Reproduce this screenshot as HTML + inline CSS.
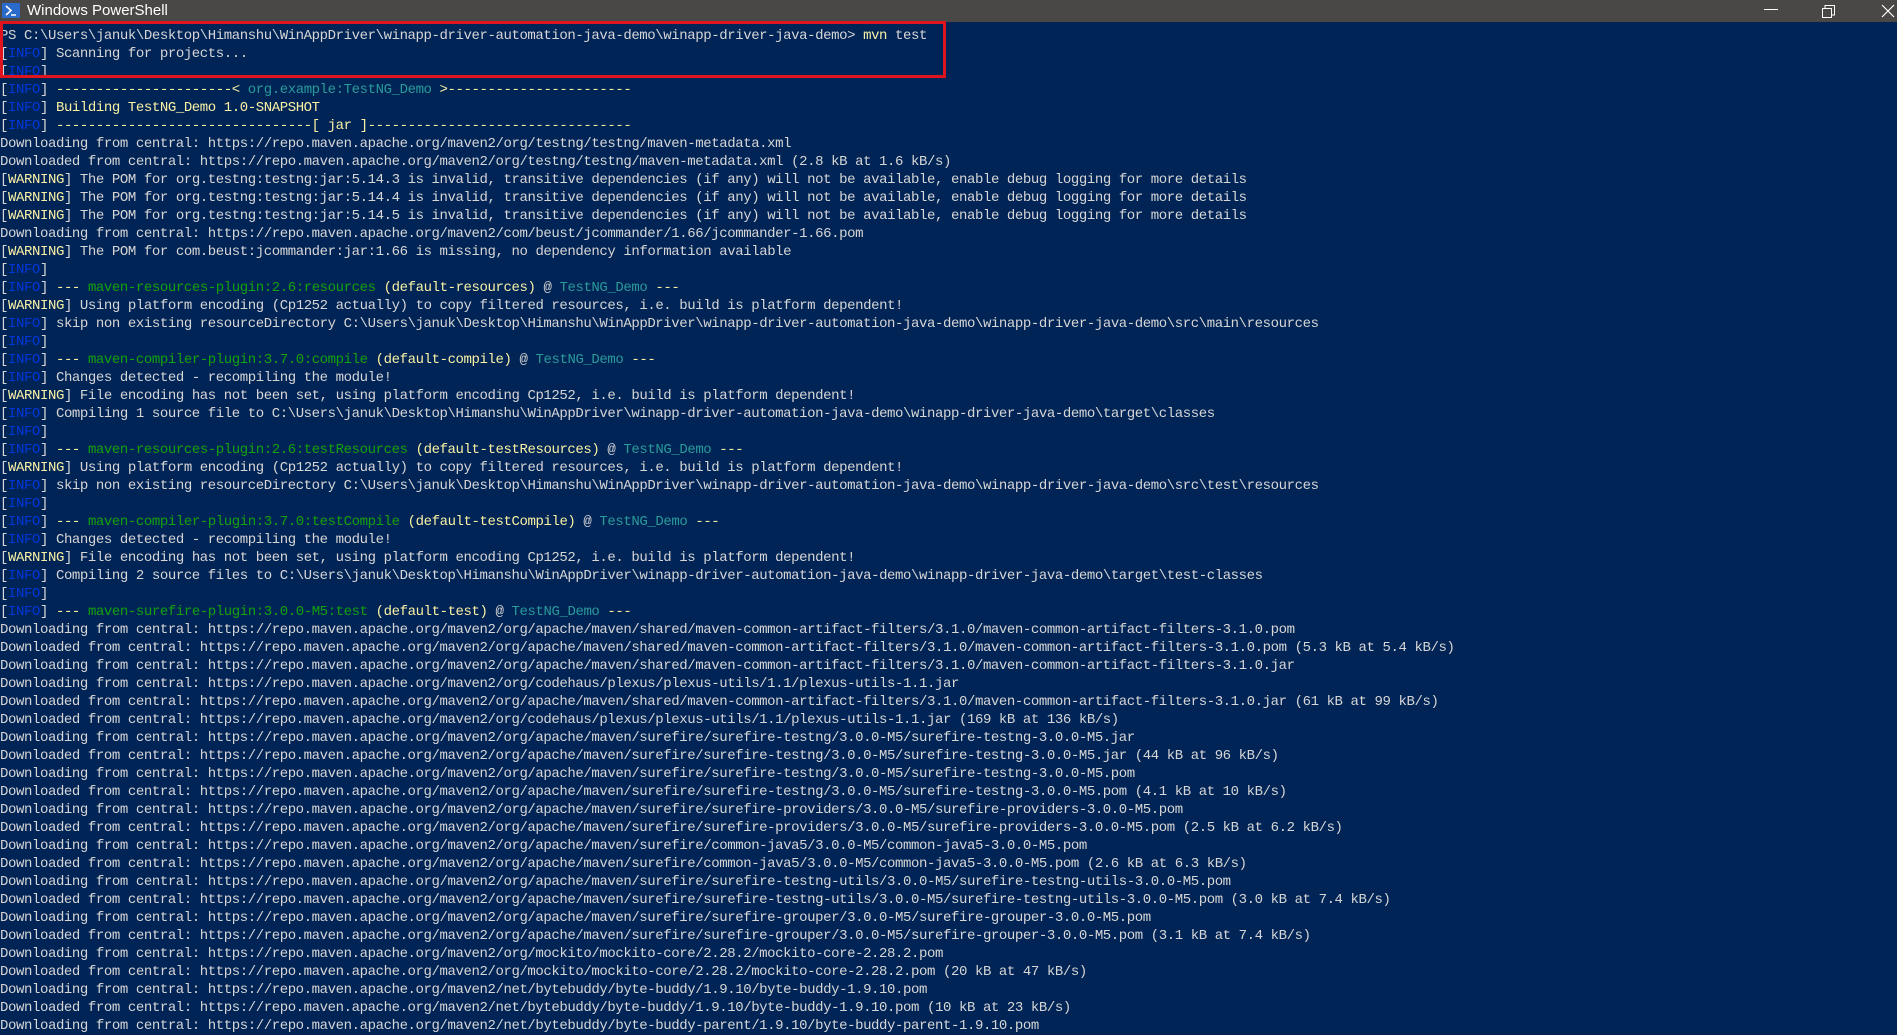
<!DOCTYPE html>
<html><head><meta charset="utf-8"><style>
html,body{margin:0;padding:0;width:1897px;height:1033px;overflow:hidden;background:#012456;}
#tb{position:absolute;left:0;top:0;width:1897px;height:22px;background:#4a4846;color:#fff;font-family:"Liberation Sans",sans-serif;font-size:15px;}
#tb .t{position:absolute;left:27px;top:2px;}
#term{position:absolute;left:0;top:27px;font-family:"Liberation Mono",monospace;font-size:14px;letter-spacing:-0.41px;line-height:18px;color:#d6d6d6;white-space:pre;}
.i{color:#0037da}.w{color:#f9f1a5}.y{color:#f9f1a5}.g{color:#13a10e}.c{color:#2a9a9a}
#box{position:absolute;left:0;top:21px;width:940px;height:51px;border:3px solid #e0141e;}
</style></head><body>
<div id="tb">
<svg style="position:absolute;left:2px;top:3px" width="18" height="15"><rect x="0" y="0" width="18" height="15" rx="1" fill="#2a6acb"/><path d="M4 3 L9 7.5 L4 12" stroke="#fff" stroke-width="1.6" fill="none"/><path d="M9 12 H14" stroke="#fff" stroke-width="1.5"/></svg>
<span class="t">Windows PowerShell</span>
<svg style="position:absolute;left:1764px;top:9px" width="14" height="2"><rect width="14" height="1" fill="#fff"/></svg>
<svg style="position:absolute;left:1822px;top:5px" width="13" height="13"><rect x="0.5" y="3.5" width="9" height="9" fill="none" stroke="#fff"/><path d="M3 3.5 V0.5 H12.5 V10 H9.5" fill="none" stroke="#fff"/></svg>
<svg style="position:absolute;left:1881px;top:4px" width="14" height="14"><path d="M1 1 L13 13 M13 1 L1 13" stroke="#fff" stroke-width="1.2"/></svg>
</div>
<div id="term">PS C:\Users\januk\Desktop\Himanshu\WinAppDriver\winapp-driver-automation-java-demo\winapp-driver-java-demo&gt; <span class="y">mvn</span> test
[<span class="i">INFO</span>] Scanning for projects...
[<span class="i">INFO</span>]
[<span class="i">INFO</span>] <span class="y">----------------------&lt; </span><span class="c">org.example:TestNG_Demo</span><span class="y"> &gt;-----------------------</span>
[<span class="i">INFO</span>] <span class="y">Building TestNG_Demo 1.0-SNAPSHOT</span>
[<span class="i">INFO</span>] <span class="y">--------------------------------[ jar ]---------------------------------</span>
Downloading from central: https://repo.maven.apache.org/maven2/org/testng/testng/maven-metadata.xml
Downloaded from central: https://repo.maven.apache.org/maven2/org/testng/testng/maven-metadata.xml (2.8 kB at 1.6 kB/s)
[<span class="w">WARNING</span>] The POM for org.testng:testng:jar:5.14.3 is invalid, transitive dependencies (if any) will not be available, enable debug logging for more details
[<span class="w">WARNING</span>] The POM for org.testng:testng:jar:5.14.4 is invalid, transitive dependencies (if any) will not be available, enable debug logging for more details
[<span class="w">WARNING</span>] The POM for org.testng:testng:jar:5.14.5 is invalid, transitive dependencies (if any) will not be available, enable debug logging for more details
Downloading from central: https://repo.maven.apache.org/maven2/com/beust/jcommander/1.66/jcommander-1.66.pom
[<span class="w">WARNING</span>] The POM for com.beust:jcommander:jar:1.66 is missing, no dependency information available
[<span class="i">INFO</span>]
[<span class="i">INFO</span>] <span class="y">---</span> <span class="g">maven-resources-plugin:2.6:resources</span> <span class="y">(default-resources)</span> @ <span class="c">TestNG_Demo</span> <span class="y">---</span>
[<span class="w">WARNING</span>] Using platform encoding (Cp1252 actually) to copy filtered resources, i.e. build is platform dependent!
[<span class="i">INFO</span>] skip non existing resourceDirectory C:\Users\januk\Desktop\Himanshu\WinAppDriver\winapp-driver-automation-java-demo\winapp-driver-java-demo\src\main\resources
[<span class="i">INFO</span>]
[<span class="i">INFO</span>] <span class="y">---</span> <span class="g">maven-compiler-plugin:3.7.0:compile</span> <span class="y">(default-compile)</span> @ <span class="c">TestNG_Demo</span> <span class="y">---</span>
[<span class="i">INFO</span>] Changes detected - recompiling the module!
[<span class="w">WARNING</span>] File encoding has not been set, using platform encoding Cp1252, i.e. build is platform dependent!
[<span class="i">INFO</span>] Compiling 1 source file to C:\Users\januk\Desktop\Himanshu\WinAppDriver\winapp-driver-automation-java-demo\winapp-driver-java-demo\target\classes
[<span class="i">INFO</span>]
[<span class="i">INFO</span>] <span class="y">---</span> <span class="g">maven-resources-plugin:2.6:testResources</span> <span class="y">(default-testResources)</span> @ <span class="c">TestNG_Demo</span> <span class="y">---</span>
[<span class="w">WARNING</span>] Using platform encoding (Cp1252 actually) to copy filtered resources, i.e. build is platform dependent!
[<span class="i">INFO</span>] skip non existing resourceDirectory C:\Users\januk\Desktop\Himanshu\WinAppDriver\winapp-driver-automation-java-demo\winapp-driver-java-demo\src\test\resources
[<span class="i">INFO</span>]
[<span class="i">INFO</span>] <span class="y">---</span> <span class="g">maven-compiler-plugin:3.7.0:testCompile</span> <span class="y">(default-testCompile)</span> @ <span class="c">TestNG_Demo</span> <span class="y">---</span>
[<span class="i">INFO</span>] Changes detected - recompiling the module!
[<span class="w">WARNING</span>] File encoding has not been set, using platform encoding Cp1252, i.e. build is platform dependent!
[<span class="i">INFO</span>] Compiling 2 source files to C:\Users\januk\Desktop\Himanshu\WinAppDriver\winapp-driver-automation-java-demo\winapp-driver-java-demo\target\test-classes
[<span class="i">INFO</span>]
[<span class="i">INFO</span>] <span class="y">---</span> <span class="g">maven-surefire-plugin:3.0.0-M5:test</span> <span class="y">(default-test)</span> @ <span class="c">TestNG_Demo</span> <span class="y">---</span>
Downloading from central: https://repo.maven.apache.org/maven2/org/apache/maven/shared/maven-common-artifact-filters/3.1.0/maven-common-artifact-filters-3.1.0.pom
Downloaded from central: https://repo.maven.apache.org/maven2/org/apache/maven/shared/maven-common-artifact-filters/3.1.0/maven-common-artifact-filters-3.1.0.pom (5.3 kB at 5.4 kB/s)
Downloading from central: https://repo.maven.apache.org/maven2/org/apache/maven/shared/maven-common-artifact-filters/3.1.0/maven-common-artifact-filters-3.1.0.jar
Downloading from central: https://repo.maven.apache.org/maven2/org/codehaus/plexus/plexus-utils/1.1/plexus-utils-1.1.jar
Downloaded from central: https://repo.maven.apache.org/maven2/org/apache/maven/shared/maven-common-artifact-filters/3.1.0/maven-common-artifact-filters-3.1.0.jar (61 kB at 99 kB/s)
Downloaded from central: https://repo.maven.apache.org/maven2/org/codehaus/plexus/plexus-utils/1.1/plexus-utils-1.1.jar (169 kB at 136 kB/s)
Downloading from central: https://repo.maven.apache.org/maven2/org/apache/maven/surefire/surefire-testng/3.0.0-M5/surefire-testng-3.0.0-M5.jar
Downloaded from central: https://repo.maven.apache.org/maven2/org/apache/maven/surefire/surefire-testng/3.0.0-M5/surefire-testng-3.0.0-M5.jar (44 kB at 96 kB/s)
Downloading from central: https://repo.maven.apache.org/maven2/org/apache/maven/surefire/surefire-testng/3.0.0-M5/surefire-testng-3.0.0-M5.pom
Downloaded from central: https://repo.maven.apache.org/maven2/org/apache/maven/surefire/surefire-testng/3.0.0-M5/surefire-testng-3.0.0-M5.pom (4.1 kB at 10 kB/s)
Downloading from central: https://repo.maven.apache.org/maven2/org/apache/maven/surefire/surefire-providers/3.0.0-M5/surefire-providers-3.0.0-M5.pom
Downloaded from central: https://repo.maven.apache.org/maven2/org/apache/maven/surefire/surefire-providers/3.0.0-M5/surefire-providers-3.0.0-M5.pom (2.5 kB at 6.2 kB/s)
Downloading from central: https://repo.maven.apache.org/maven2/org/apache/maven/surefire/common-java5/3.0.0-M5/common-java5-3.0.0-M5.pom
Downloaded from central: https://repo.maven.apache.org/maven2/org/apache/maven/surefire/common-java5/3.0.0-M5/common-java5-3.0.0-M5.pom (2.6 kB at 6.3 kB/s)
Downloading from central: https://repo.maven.apache.org/maven2/org/apache/maven/surefire/surefire-testng-utils/3.0.0-M5/surefire-testng-utils-3.0.0-M5.pom
Downloaded from central: https://repo.maven.apache.org/maven2/org/apache/maven/surefire/surefire-testng-utils/3.0.0-M5/surefire-testng-utils-3.0.0-M5.pom (3.0 kB at 7.4 kB/s)
Downloading from central: https://repo.maven.apache.org/maven2/org/apache/maven/surefire/surefire-grouper/3.0.0-M5/surefire-grouper-3.0.0-M5.pom
Downloaded from central: https://repo.maven.apache.org/maven2/org/apache/maven/surefire/surefire-grouper/3.0.0-M5/surefire-grouper-3.0.0-M5.pom (3.1 kB at 7.4 kB/s)
Downloading from central: https://repo.maven.apache.org/maven2/org/mockito/mockito-core/2.28.2/mockito-core-2.28.2.pom
Downloaded from central: https://repo.maven.apache.org/maven2/org/mockito/mockito-core/2.28.2/mockito-core-2.28.2.pom (20 kB at 47 kB/s)
Downloading from central: https://repo.maven.apache.org/maven2/net/bytebuddy/byte-buddy/1.9.10/byte-buddy-1.9.10.pom
Downloaded from central: https://repo.maven.apache.org/maven2/net/bytebuddy/byte-buddy/1.9.10/byte-buddy-1.9.10.pom (10 kB at 23 kB/s)
Downloading from central: https://repo.maven.apache.org/maven2/net/bytebuddy/byte-buddy-parent/1.9.10/byte-buddy-parent-1.9.10.pom</div>
<div id="box"></div>
</body></html>
